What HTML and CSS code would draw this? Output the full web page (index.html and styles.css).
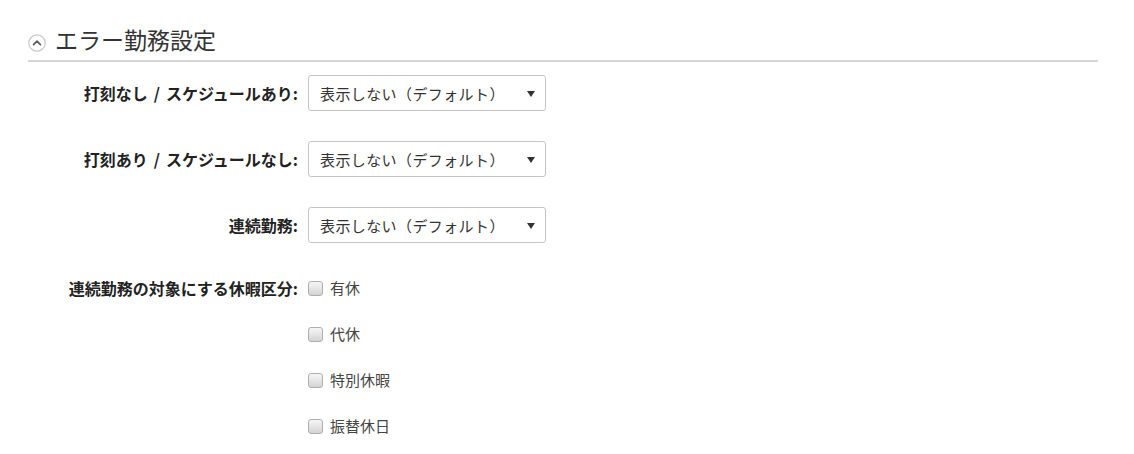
FILE: index.html
```html
<!DOCTYPE html>
<html lang="ja">
<head>
<meta charset="utf-8">
<link rel="stylesheet" href="styles.css">
</head>
<body>
<section class="panel">
  <header class="panel-head">
    <span class="toggle">
      <svg width="18" height="18" viewBox="0 0 18 18"><circle cx="9" cy="9" r="8.2" fill="#fff" stroke="#c8c8c8" stroke-width="1.2"/><path d="M5.6 10.6 L9 7.2 L12.4 10.6" fill="none" stroke="#5a5a5a" stroke-width="1.7" stroke-linecap="round" stroke-linejoin="round"/></svg>
    </span>
    <h2 class="panel-title">エラー勤務設定</h2>
  </header>
  <div class="form">
    <div class="row">
      <label class="label">打刻なし<span class="slash">/</span>スケジュールあり:</label>
      <div class="control"><div class="select"><span>表示しない（デフォルト）</span><span class="caret"></span></div></div>
    </div>
    <div class="row">
      <label class="label">打刻あり<span class="slash">/</span>スケジュールなし:</label>
      <div class="control"><div class="select"><span>表示しない（デフォルト）</span><span class="caret"></span></div></div>
    </div>
    <div class="row">
      <label class="label">連続勤務:</label>
      <div class="control"><div class="select"><span>表示しない（デフォルト）</span><span class="caret"></span></div></div>
    </div>
    <div class="row row-checks">
      <label class="label">連続勤務の対象にする休暇区分:</label>
      <div class="checks">
        <div class="check"><span class="box"></span><span>有休</span></div>
        <div class="check"><span class="box"></span><span>代休</span></div>
        <div class="check"><span class="box"></span><span>特別休暇</span></div>
        <div class="check"><span class="box"></span><span>振替休日</span></div>
      </div>
    </div>
  </div>
</section>
</body>
</html>
```
FILE: styles.css
```css
html, body {
  margin: 0;
  padding: 0;
  background: #fff;
}
body {
  font-family: "Noto Sans CJK JP", "Noto Sans", sans-serif;
  color: #333;
}
.panel {
  padding: 24px 36px 0 28px;
}
.panel-head {
  display: flex;
  align-items: center;
  gap: 9px;
  padding: 0 0 6px 0;
  border-bottom: 2px solid #d6d6d6;
}
.toggle {
  display: flex;
  width: 18px;
  height: 18px;
  margin-top: 8px;
}
.panel-title {
  margin: 0;
  font-size: 23px;
  font-weight: 400;
  line-height: 30px;
  color: #333;
}
.form {
  display: flex;
  flex-direction: column;
  gap: 30px;
  padding-top: 13px;
}
.row {
  display: grid;
  grid-template-columns: 280px auto;
  align-items: center;
}
.label {
  text-align: right;
  padding-right: 10px;
  font-size: 16px;
  font-weight: 700;
  color: #222;
  white-space: nowrap;
}
.slash {
  margin: 0 6px;
}
.select {
  width: 238px;
  height: 36px;
  box-sizing: border-box;
  border: 1px solid #c4c4c4;
  border-radius: 3px;
  display: flex;
  align-items: center;
  justify-content: space-between;
  padding: 0 10px 0 11px;
  font-size: 15px;
  letter-spacing: 0.4px;
  color: #333;
}
.caret {
  width: 0;
  height: 0;
  border-left: 4px solid transparent;
  border-right: 4px solid transparent;
  border-top: 6px solid #333;
  margin-top: 2px;
}
.row-checks {
  align-items: start;
  margin-top: 5px;
}
.row-checks .label {
  line-height: 20px;
}
.checks {
  display: flex;
  flex-direction: column;
  gap: 26px;
}
.check {
  display: flex;
  align-items: center;
  gap: 7px;
  font-size: 15px;
  line-height: 20px;
  color: #444;
}
.box {
  width: 15px;
  height: 15px;
  box-sizing: border-box;
  border: 1px solid #aeaeae;
  border-radius: 3px;
  background: linear-gradient(#f6f6f6, #d4d4d4);
}
```
